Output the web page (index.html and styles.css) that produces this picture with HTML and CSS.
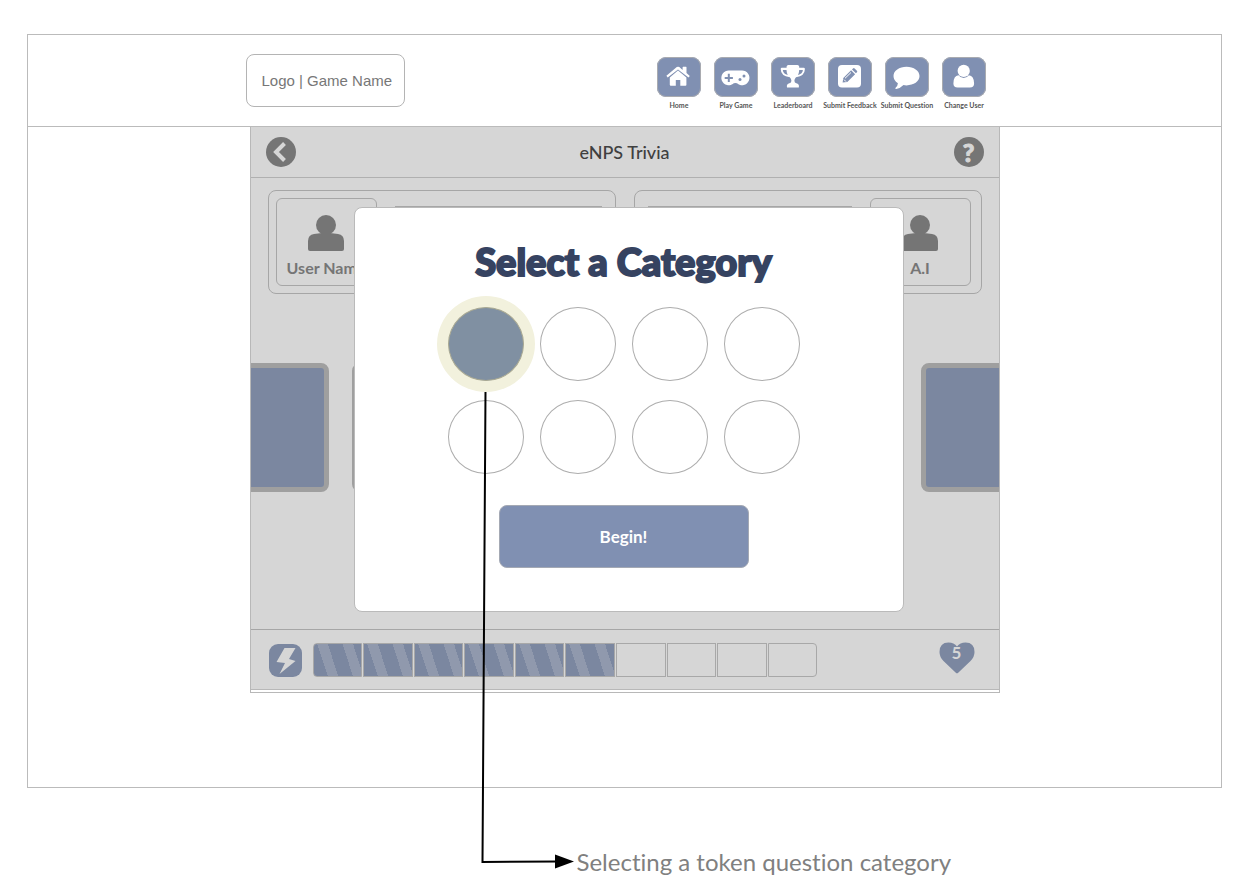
FILE: index.html
```html
<!DOCTYPE html>
<html lang="en">
<head>
    <meta charset="UTF-8">
    <meta name="viewport" content="width=device-width, initial-scale=1.0">
    <title>eNPS Trivia</title>
    <link rel="stylesheet" href="styles.css">
</head>
<body>
    <div class="frame">
        <header class="header">
            <div class="header-inner">
                <a class="logo" href="#">Logo | Game Name</a>
                <nav class="nav">
                    <a class="nav-item" href="#">
                        <svg class="nav-icon" viewBox="0 0 44 40" aria-hidden="true">
                            <path d="M12.8 20.4 21 13.4l8.4 7v7.4a.9.9 0 0 1-.9.9h-5.2v-5.8h-4.5v5.8h-5.1a.9.9 0 0 1-.9-.9z"/>
                            <path d="M9.4 18.8 19.8 10.1q1.300-.9 2.500 0l3.300 2.800v-2.700q0-.4.4-.4h3.100q.4 0 .4.4v5.900l3.300 2.800-1.300 1.500L21 12.600l-10.300 7.800z"/>
                        </svg>
                        <span class="nav-label">Home</span>
                    </a>
                    <a class="nav-item" href="#">
                        <svg class="nav-icon" viewBox="0 0 44 40" aria-hidden="true">
                            <path d="M15 13.500h13a7.400 7.400 0 1 1-5 12.800q-1.600-.6-3.200 0A7.400 7.400 0 1 1 15 13.500z"/>
                            <path class="cut" d="M13.800 16.800h2v3.100h3.100v2h-3.100V25h-2v-3.100h-3.100v-2h3.100z"/>
                            <circle class="cut" cx="26" cy="22.600" r="1.500"/>
                            <circle class="cut" cx="30" cy="19" r="1.500"/>
                        </svg>
                        <span class="nav-label">Play Game</span>
                    </a>
                    <a class="nav-item" href="#">
                        <svg class="nav-icon" viewBox="0 0 44 40" aria-hidden="true">
                            <path d="M15.600 9.500Q15.800 8 17.300 8h9.200q1.500 0 1.700 1.500v1.300h4.500q1.200 0 1.200 1.200 0 7-8.900 8.200-1.600 1.500-1.600 3.500t2 2.500q2.200.4 2.500 2.400v1.300q0 .6-.6.6H16.500q-.6 0-.6-.6v-1.300q.3-2 2.500-2.400 2-.5 2-2.500t-1.600-3.500Q9.700 19 9.700 12q0-1.200 1.200-1.200h4.700z"/>
                            <path class="cut" d="M11.800 12.900h3.700q.1 2.800 1.300 5-4.700-1.200-5-5zM28.200 12.900h3.700q-.3 3.800-5 5 1.200-2.200 1.300-5z"/>
                        </svg>
                        <span class="nav-label">Leaderboard</span>
                    </a>
                    <a class="nav-item" href="#">
                        <svg class="nav-icon" viewBox="0 0 44 40" aria-hidden="true">
                            <rect x="10" y="8" width="23" height="22.500" rx="4"/>
                            <path class="cut" d="m14.600 25.600.7-4.700 7.800-7.600 4 4-7.800 7.600zM24 12.400l1-1q.8-.7 1.600 0l2.300 2.300q.8.8 0 1.600l-1 1z"/>
                            <path class="line" d="m17 21.300 6-5.800M16 22.600l2 2"/>
                        </svg>
                        <span class="nav-label">Submit Feedback</span>
                    </a>
                    <a class="nav-item" href="#">
                        <svg class="nav-icon" viewBox="0 0 44 40" aria-hidden="true">
                            <path d="M21.500 9.800c7.200 0 13 4 13 9.300s-5.800 9.300-13 9.300q-1.600 0-3-.3-3 3.200-7.300 3.900-.8 0-.8-.6 0-.4.4-.8 1.800-1.500 2.100-4.400-4.400-2.700-4.400-7.100c0-5.300 5.800-9.300 13-9.300z"/>
                        </svg>
                        <span class="nav-label">Submit Question</span>
                    </a>
                    <a class="nav-item" href="#">
                        <svg class="nav-icon" viewBox="0 0 44 40" aria-hidden="true">
                            <circle cx="21.700" cy="13.900" r="6.100"/>
                            <path d="M16.500 18.300q2 2.700 5.200 2.700t5.200-2.700q5 .4 5.200 8.200 0 4-4.200 4H15.600q-4.200 0-4.200-4 .1-7.800 5.100-8.200z"/>
                        </svg>
                        <span class="nav-label">Change User</span>
                    </a>
                </nav>
            </div>
        </header>

        <main class="game">
            <div class="title-bar">
                <button class="round-btn" type="button" aria-label="Back">
                    <svg viewBox="0 0 30 30" aria-hidden="true"><path d="M18.500 6.500 10 15l8.500 8.500"/></svg>
                </button>
                <h1 class="game-title">eNPS Trivia</h1>
                <button class="round-btn help-btn" type="button" aria-label="Help">?</button>
            </div>

            <div class="board">
                <!-- dimmed game table behind the dialog -->
                <div class="table-layer">
                    <div class="players">
                        <section class="player">
                            <div class="avatar">
                                <svg viewBox="0 0 36 36" aria-hidden="true"><circle cx="18" cy="10" r="10"/><path d="M0 34V26q0-6 6-7l8-1h8l8 1q6 1 6 7v8q0 2-2 2H2q-2 0-2-2z"/></svg>
                                <span>User Name</span>
                            </div>
                            <div class="player-info"></div>
                        </section>
                        <section class="player player-right">
                            <div class="avatar">
                                <svg viewBox="0 0 36 36" aria-hidden="true"><circle cx="18" cy="10" r="10"/><path d="M0 34V26q0-6 6-7l8-1h8l8 1q6 1 6 7v8q0 2-2 2H2q-2 0-2-2z"/></svg>
                                <span>A.I</span>
                            </div>
                            <div class="player-info"></div>
                        </section>
                    </div>
                    <div class="cards">
                        <div class="card"></div>
                        <div class="card card-center"></div>
                        <div class="card"></div>
                    </div>
                </div>

                <form class="modal">
                    <h2 class="modal-title" id="modal-title">Select a Category</h2>
                    <div class="categories" role="radiogroup" aria-labelledby="modal-title">
                        <div class="category">
                            <input type="radio" name="category" aria-label="Category 1" checked>
                            <svg class="pointer" viewBox="0 0 96 480" aria-hidden="true">
                                <path class="pointer-line" d="M4.500 0 1.500 470 78 469.500"/>
                                <path d="M74 462.500 93 469.500 74 476.500z"/>
                            </svg>
                        </div>
                        <div class="category"><input type="radio" name="category" aria-label="Category 2"></div>
                        <div class="category"><input type="radio" name="category" aria-label="Category 3"></div>
                        <div class="category"><input type="radio" name="category" aria-label="Category 4"></div>
                        <div class="category"><input type="radio" name="category" aria-label="Category 5"></div>
                        <div class="category"><input type="radio" name="category" aria-label="Category 6"></div>
                        <div class="category"><input type="radio" name="category" aria-label="Category 7"></div>
                        <div class="category"><input type="radio" name="category" aria-label="Category 8"></div>
                    </div>
                    <button class="begin-btn" type="button">Begin!</button>
                </form>
            </div>

            <div class="status-bar">
                <svg class="bolt" viewBox="0 0 33 33" aria-hidden="true">
                    <rect width="33" height="33" rx="9"/>
                    <path d="M15.500 4h11l-6.500 11 6.500 2-16 13 5.500-11-8.500-1z"/>
                </svg>
                <div class="power">
                    <span class="cell full"></span>
                    <span class="cell full"></span>
                    <span class="cell full"></span>
                    <span class="cell full"></span>
                    <span class="cell full"></span>
                    <span class="cell full"></span>
                    <span class="cell"></span>
                    <span class="cell"></span>
                    <span class="cell"></span>
                    <span class="cell"></span>
                </div>
                <div class="lives">
                    <svg viewBox="0 0 36 32" aria-hidden="true"><path d="M18 4.500Q15 .5 9.500.5.500.500.500 10q0 5 4 9l12.300 11.700q1.200 1 2.400 0L31.500 19q4-4 4-9 0-9.500-9-9.500Q21 .5 18 4.500z"/></svg>
                    <span>5</span>
                </div>
            </div>
        </main>
    </div>

    <p class="caption">Selecting a token question category</p>
</body>
</html>
```
FILE: styles.css
```css
* {
    box-sizing: border-box;
}
body {
    margin: 0;
    padding: 34px 29px 16px 27px;
    font-family: Lato, 'Open Sans', sans-serif;
    font-variant-ligatures: none;
    background: #fff;
    color: #757575;
}
.frame {
    border: 1px solid #bbb;
    padding-bottom: 94px;
}

/* Header */
.header {
    border-bottom: 1px solid #bbb;
    padding: 19px 0 16px;
}
.header-inner {
    display: flex;
    justify-content: space-between;
    align-items: flex-start;
    max-width: 758px;
    margin: 0 auto;
    padding-right: 13px;
}
.logo {
    padding: 0 12px 0 15px;
    border: 1px solid #b4b4b4;
    border-radius: 8px;
    font: 15px/51px 'Liberation Sans', sans-serif;
    color: #777;
    text-decoration: none;
}
.nav {
    display: flex;
    gap: 4px;
    padding-top: 3px;
}
.nav-item {
    display: flex;
    flex-direction: column;
    align-items: center;
    gap: 3px;
    width: 53px;
    color: #555;
    text-decoration: none;
}
.nav-icon {
    width: 44px;
    height: 40px;
    border-radius: 9px;
    background: #8090b2;
    box-shadow: inset 0 0 0 1px #a9abb0;
    fill: #fff;
}
.nav-icon .cut {
    fill: #8090b2;
}
.nav-icon .line {
    fill: none;
    stroke: #fff;
    stroke-width: 1;
}
.nav-label {
    font-size: 7px;
    font-weight: 700;
    line-height: 10px;
    white-space: nowrap;
}

/* Game */
.game {
    max-width: 750px;
    margin: 0 auto;
    border: 1px solid #b8b8b8;
    border-top: none;
    padding-bottom: 2px;
}
.title-bar {
    display: flex;
    justify-content: space-between;
    align-items: center;
    height: 51px;
    padding: 0 15px;
    background: #d6d6d6;
    border-bottom: 1px solid #b0b0b0;
}
.game-title {
    margin: 0;
    font-size: 18px;
    font-weight: 500;
    color: #404040;
}
.round-btn {
    width: 30px;
    height: 30px;
    padding: 0;
    border: none;
    border-radius: 50%;
    background: #757575;
    color: #d6d6d6;
    cursor: pointer;
}
.round-btn svg {
    display: block;
    fill: none;
    stroke: #d6d6d6;
    stroke-width: 4;
}
.help-btn {
    font: 900 25px/30px Lato, sans-serif;
    -webkit-text-stroke: 1px #d6d6d6;
}
.board {
    display: grid;
    background: #d6d6d6;
}
.table-layer,
.modal {
    grid-area: 1 / 1;
}
.table-layer {
    overflow: hidden;
    padding-top: 12px;
}
.players {
    display: grid;
    grid-template-columns: 1fr 1fr;
    gap: 18px;
    padding: 0 17px;
}
.player {
    display: flex;
    gap: 12px;
    height: 104px;
    padding: 7px;
    border: 1px solid #a6a6a6;
    border-radius: 8px;
}
.player-right {
    flex-direction: row-reverse;
    padding-right: 10px;
}
.avatar {
    display: flex;
    flex-direction: column;
    align-items: center;
    gap: 7px;
    width: 101px;
    padding-top: 16px;
    border: 1px solid #a6a6a6;
    border-radius: 6px;
    font-size: 16px;
    font-weight: 700;
    line-height: 20px;
}
.avatar svg {
    width: 36px;
    fill: #757575;
}
.player-info {
    flex: 1;
    margin: 8px 6px;
    border-top: 1px solid #a6a6a6;
}
.cards {
    display: flex;
    gap: 23px;
    margin: 69px -8px 0;
}
.card {
    width: 86px;
    height: 129px;
    border: 5px solid #9f9f9f;
    border-radius: 8px;
    background: #7b87a0;
}
.card-center {
    flex: 1;
}

/* Category dialog */
.modal {
    position: relative;
    display: flex;
    flex-direction: column;
    align-items: center;
    margin: 29px 95px 17px 103px;
    padding: 31px 10px 43px 0;
    border: 1px solid #bababa;
    border-radius: 8px;
    background: #fff;
}
.modal-title {
    margin: 0 0 24px;
    font-size: 38px;
    font-weight: 900;
    line-height: 44px;
    color: #364361;
    -webkit-text-stroke: 2px #364361;
}
.categories {
    display: grid;
    grid-template-columns: repeat(4, 76px);
    gap: 19px 16px;
}
.category {
    position: relative;
    height: 74px;
}
.category input {
    appearance: none;
    display: block;
    width: 100%;
    height: 100%;
    margin: 0;
    border: 1px solid #adadad;
    border-radius: 50%;
    cursor: pointer;
}
.category input:checked {
    border-color: #a9a993;
    background: #8090a2;
    box-shadow: 0 0 0 11px #f2f1dd;
}
.pointer {
    position: absolute;
    z-index: 1;
    top: 85px;
    left: 33px;
    width: 96px;
    height: 480px;
    pointer-events: none;
}
.pointer-line {
    fill: none;
    stroke: #000;
    stroke-width: 2;
}
.begin-btn {
    width: 250px;
    height: 63px;
    margin-top: 31px;
    border: 1px solid #a4a9b4;
    border-radius: 8px;
    background: #8090b2;
    color: #fff;
    font: 700 17px Lato, sans-serif;
    cursor: pointer;
}

/* Status bar */
.status-bar {
    display: flex;
    align-items: center;
    gap: 11px;
    height: 61px;
    padding: 1px 24px 0 18px;
    border-top: 1px solid #a6a6a6;
    border-bottom: 1px solid #b8b8b8;
    background: #d6d6d6;
}
.bolt {
    width: 33px;
    height: 33px;
    fill: #7b87a0;
}
.bolt path {
    fill: #d6d6d6;
}
.power {
    display: grid;
    grid-template-columns: repeat(10, 1fr);
    gap: 1px;
    flex: 0 1 505px;
}
.cell {
    height: 34px;
    border: 1px solid #a8a8a8;
}
.cell:first-child {
    border-radius: 4px 0 0 4px;
}
.cell:last-child {
    border-radius: 0 4px 4px 0;
}
.full {
    background: repeating-linear-gradient(72deg, #7b87a0 0 13px, #9099ad 13px 23px, #7b87a0 23px 24px);
}
.lives {
    display: grid;
    justify-items: center;
    margin-left: auto;
    padding-bottom: 4px;
    color: #d6d6d6;
}
.lives svg,
.lives span {
    grid-area: 1 / 1;
}
.lives svg {
    width: 36px;
    fill: #7b87a0;
}
.lives span {
    font-size: 17px;
    font-weight: 700;
    line-height: 22px;
}

.caption {
    margin: 60px 0 0 calc(50% - 48px);
    font-size: 24px;
    line-height: 28px;
    color: #808080;
}
```
